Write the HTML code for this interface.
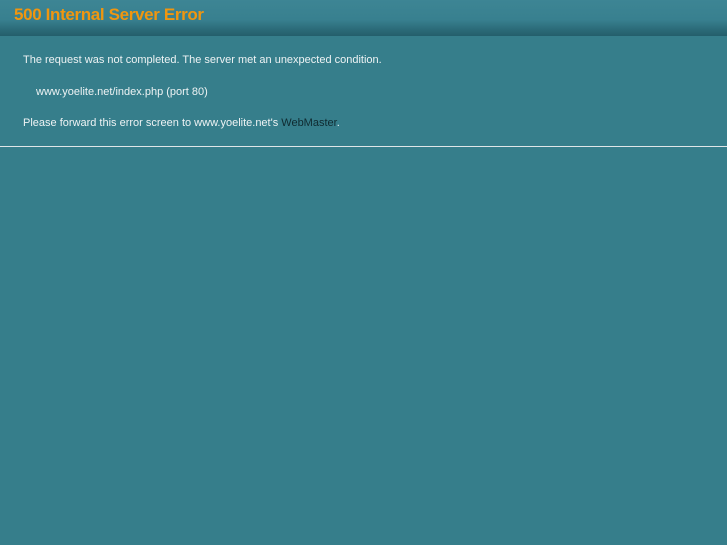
<!DOCTYPE html>
<html><head><style>
html,body{margin:0;padding:0;width:727px;height:545px;overflow:hidden;background:#367e8b;font-family:"Liberation Sans",sans-serif;}
#hd{position:absolute;left:0;top:0;width:727px;height:36px;background:linear-gradient(#3d8594 0%,#38808f 55%,#2c6c7a 80%,#245e6b 100%);}
#hd h1{margin:0;position:absolute;left:14px;top:5px;font-size:17px;font-weight:bold;color:#f0960f;letter-spacing:-0.35px;}
.t{position:absolute;font-size:11px;color:#eef3f4;white-space:nowrap;}
a{color:#0f2a30;text-decoration:none;}
#ln{position:absolute;left:0;top:146px;width:727px;height:1px;background:#dfe6e8;}
</style></head><body>
<div id="hd"><h1>500 Internal Server Error</h1></div>
<div class="t" style="left:23px;top:54px">The request was not completed. The server met an unexpected condition.</div>
<div class="t" style="left:36px;top:86px">www.yoelite.net/index.php (port 80)</div>
<div class="t" style="left:23px;top:117px">Please forward this error screen to www.yoelite.net's <a>WebMaster</a>.</div>
<div id="ln"></div>
</body></html>
